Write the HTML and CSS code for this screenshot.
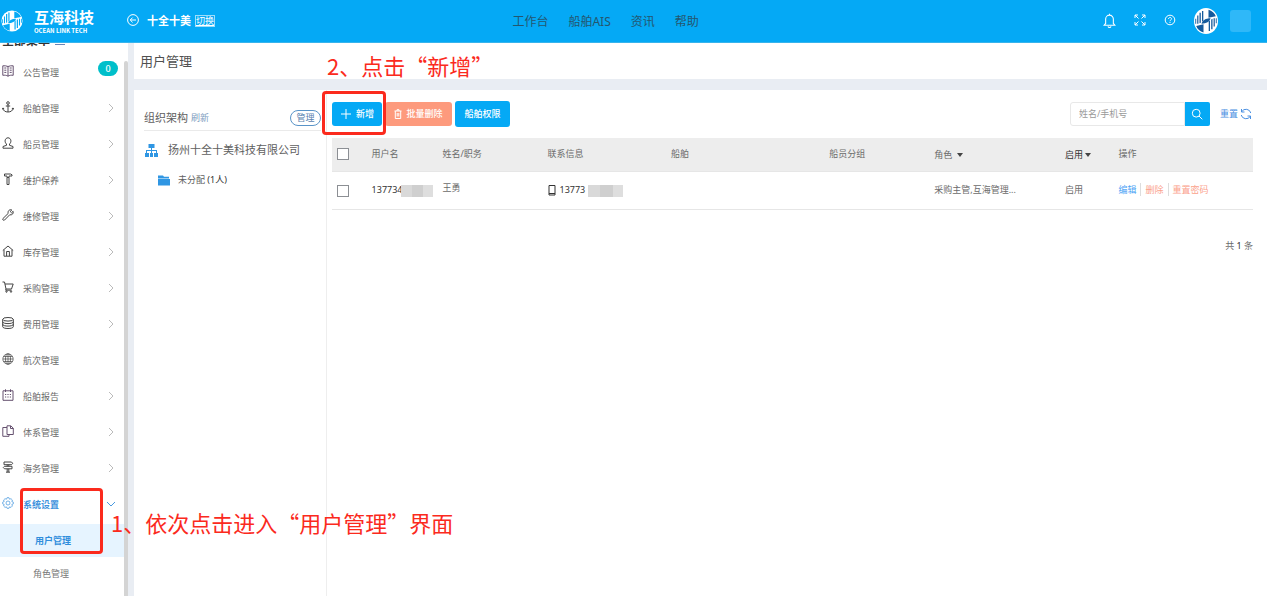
FILE: index.html
```html
<!DOCTYPE html>
<html lang="zh-CN">
<head>
<meta charset="utf-8">
<title>用户管理</title>
<link rel="stylesheet" href="styles.css">
</head>
<body>
<svg class="defs" aria-hidden="true">
  <symbol id="chev" viewBox="0 0 6 10"><path d="M1 1l4 4-4 4"/></symbol>
  <symbol id="mark" viewBox="0 0 24 24">
    <path d="M14.500 1.500C18 2.300 20.700 4.600 21.800 7.500L14.500 9zM9.500 22.500C6 21.700 3.300 19.400 2.200 16.500L9.500 15z"/>
    <path d="M7.500 14.500c1-3 4-5 9-5-1 3-4 5-9 5z"/>
    <path d="M8 2.800h1.300v9L8 12.800zM5.500 4.300h1.300v9.200l-1.300.5zM3.200 7h1.200v7.500h-1.200zM1.300 10h.9v4.500h-.9z"/>
    <path d="M16 21.200h-1.300v-9l1.300-1zM18.500 19.700h-1.300v-9.200l1.300-.5zM20.800 17h-1.200V9.500h1.200zM22.700 14h-.9V9.500h.9z"/>
  </symbol>
</svg>

<header class="topbar">
  <div class="topbar-left">
    <div class="brand">
      <svg class="brand-mark" viewBox="0 0 24 24"><circle cx="12" cy="12" r="11.500"/><use href="#mark"/></svg>
      <div class="brand-text"><strong>互海科技</strong><span>OCEAN LINK TECH</span></div>
    </div>
    <div class="company">
      <svg class="icon" viewBox="0 0 12 12"><circle cx="6" cy="6" r="5.400"/><path d="M9 6H3.400M5.600 3.600L3.200 6l2.400 2.400"/></svg>
      <strong>十全十美</strong>
      <a class="switch" href="#">切换</a>
    </div>
  </div>
  <nav class="topnav">
    <a href="#">工作台</a><a href="#">船舶AIS</a><a href="#">资讯</a><a href="#">帮助</a>
  </nav>
  <div class="tools">
    <button class="tool" aria-label="通知"><svg class="bell" viewBox="0 0 12 15"><path d="M1 11.500h10L9.600 9.800V5.600a3.600 3.600 0 0 0-7.200 0v4.200zM4.600 12.500c.3 1.500 2.500 1.500 2.800 0M6 2V.6"/></svg></button>
    <button class="tool" aria-label="全屏"><svg class="icon" viewBox="0 0 12 12"><path d="M1 4V1h3M1 1l3.500 3.500M8 1h3v3M11 1L7.500 4.500M1 8v3h3M1 11l3.500-3.500M11 8v3H8M11 11L7.500 7.500"/></svg></button>
    <button class="tool" aria-label="帮助"><svg class="icon" viewBox="0 0 12 12"><circle cx="6" cy="6" r="4.800"/><path d="M4.500 5c0-2 3-2 3-.2C7.500 6 6 6 6 7.200M6 8v1"/></svg></button>
    <svg class="avatar" viewBox="0 0 24 24" preserveAspectRatio="none"><circle cx="12" cy="12" r="12"/><use href="#mark"/></svg>
    <span class="user-name"></span>
  </div>
</header>

<div class="shell">
  <aside class="sidebar">
    <h2 class="menu-title">全部菜单 <i></i></h2>
    <ul class="menu">
      <li><a href="#"><svg class="icon purple" viewBox="0 0 12 12"><path d="M6 1.500C4.500.8 2.500.6.8.8v9.500C2.500 10 4.500 10.200 6 11.200c1.500-1 3.500-1.200 5.200-.9V.8C9.500.6 7.500.8 6 1.500zM6 1.500v9.700M2.300 3h2M2.300 5.200h2M2.300 7.400h2M7.700 3h2M7.700 5.200h2M7.700 7.400h2"/></svg><span>公告管理</span><b class="badge">0</b></a></li>
      <li><a href="#"><svg class="icon" viewBox="0 0 12 12"><circle cx="6" cy="2" r="1.300"/><path d="M6 3.300V11M3.800 5h4.400M.8 7c.4 2.800 2.500 4 5.200 4s4.800-1.200 5.200-4M.5 8.300L.9 7l1.300.8M11.500 8.300L11.100 7l-1.300.8"/></svg><span>船舶管理</span><svg class="chev"><use href="#chev"/></svg></a></li>
      <li><a href="#"><svg class="icon" viewBox="0 0 12 12"><path d="M4.500 7C2 5 3 .8 6 .8S10 5 7.500 7v1.300L11 9.500v1.700H1V9.500l3.500-1.200z"/></svg><span>船员管理</span><svg class="chev"><use href="#chev"/></svg></a></li>
      <li><a href="#"><svg class="icon" viewBox="0 0 12 12"><path d="M2.500 1h6l1.500.8V3H7v1.500H5V3H2.500zM5 4.500h2v7H5z"/></svg><span>维护保养</span><svg class="chev"><use href="#chev"/></svg></a></li>
      <li><a href="#"><svg class="icon" viewBox="0 0 12 12"><path d="M9.800 1C7.500 0 5.500 2 6.200 4.400L.9 9.600c-.7 1 .6 2.200 1.600 1.500l5.200-5.300c2.300.6 4.200-1.400 3.400-3.500L9.500 3.800 8.200 2.500z"/></svg><span>维修管理</span><svg class="chev"><use href="#chev"/></svg></a></li>
      <li><a href="#"><svg class="icon" viewBox="0 0 12 12"><path d="M.8 5.500L6 1l5.200 4.500M2 4.800v6.400h8V4.800M4.600 11V6.500h2.800V11"/></svg><span>库存管理</span><svg class="chev"><use href="#chev"/></svg></a></li>
      <li><a href="#"><svg class="icon" viewBox="0 0 12 12"><path d="M.5 1h2l1.500 7h5.500l1.700-5H3M4 8l-.4 1.200h6"/><circle cx="4.500" cy="10.600" r=".7"/><circle cx="9" cy="10.600" r=".7"/></svg><span>采购管理</span><svg class="chev"><use href="#chev"/></svg></a></li>
      <li><a href="#"><svg class="icon" viewBox="0 0 12 12"><ellipse cx="6" cy="2.300" rx="5.300" ry="1.800"/><path d="M.7 2.300v7.400c0 2.400 10.600 2.400 10.600 0V2.300M.7 4.800c0 2.400 10.600 2.400 10.600 0M.7 7.300c0 2.400 10.600 2.400 10.600 0"/></svg><span>费用管理</span><svg class="chev"><use href="#chev"/></svg></a></li>
      <li><a href="#"><svg class="icon globe" viewBox="0 0 12 12"><circle cx="6" cy="6" r="5.200"/><ellipse cx="6" cy="6" rx="2.500" ry="5.200"/><path d="M6 1v10M1 6h10M1.700 3.500h8.600M1.700 8.500h8.600"/></svg><span>航次管理</span></a></li>
      <li><a href="#"><svg class="icon purple" viewBox="0 0 12 12"><path d="M1 1.800h10v9.500H1zM3.500.3v2.700M8.500.3v2.700M3 5.500h1.200M5.400 5.500h1.200M7.800 5.500H9M3 8h1.200M5.400 8h1.200M7.800 8H9"/></svg><span>船舶报告</span><svg class="chev"><use href="#chev"/></svg></a></li>
      <li><a href="#"><svg class="icon purple" viewBox="0 0 12 12"><path d="M5 2.500H.8v8.800H7V9.500M5 .8h3.800l2.500 2.400v6.300H5zM8.500 1v2.500h2.800"/></svg><span>体系管理</span><svg class="chev"><use href="#chev"/></svg></a></li>
      <li><a href="#"><svg class="icon" viewBox="0 0 12 12"><path d="M2 1h7.500l1.200 1.300-1.200 1.400H2zM10 5.300H2.500L1.300 6.500l1.200 1.300H10zM5.200 3.700v1.600M6.800 3.700v1.600M5.200 7.800V11M6.800 7.800V11M4 11.200h4"/></svg><span>海务管理</span><svg class="chev"><use href="#chev"/></svg></a></li>
      <li class="open"><a href="#"><svg class="icon globe" viewBox="0 0 12 12"><circle cx="6" cy="6" r="2"/><path d="M5 .7h2l.5 1.500 1.500-.5L10.400 3l-.6 1.500 1.500.6v1.800l-1.500.6.6 1.500L9 10.400l-1.500-.5-.5 1.400H5l-.5-1.400-1.500.5L1.600 9l.6-1.500-1.500-.6V5.100l1.500-.6L1.600 3 3 1.700l1.500.5z"/></svg><span>系统设置</span><svg class="chev down"><use href="#chev"/></svg></a>
        <ul class="submenu">
          <li class="current"><a href="#">用户管理</a></li>
          <li><a href="#">角色管理</a></li>
        </ul>
      </li>
    </ul>
    <div class="scrollbar"></div>
  </aside>

  <main class="main">
    <h1 class="page-title">用户管理</h1>
    <div class="panel">
      <section class="org">
        <div class="org-head"><h2>组织架构</h2><a href="#">刷新</a><button class="pill">管理</button></div>
        <ul class="tree">
          <li class="root"><svg class="sitemap" viewBox="0 0 13 13"><path d="M3.500 0h6v4h-6zM6 4h1v2h5v3h1v4H9V9h2V7H7v2h1v4H5V9h1V7H2v2h2v4H0V9h1V6h5z"/></svg><span>扬州十全十美科技有限公司</span></li>
          <li class="leaf"><svg class="folder" viewBox="0 0 12 10"><path d="M0 0h5l1 1.200h5V3H0zM0 3.500h12V10H0z"/></svg><span>未分配 <em>(1人)</em></span></li>
        </ul>
      </section>

      <section class="users">
        <div class="toolbar">
          <button class="btn add"><svg class="icon" viewBox="0 0 12 12"><path d="M6 1v10M1 6h10"/></svg>新增</button>
          <button class="btn danger"><svg class="trash" viewBox="0 0 8 10"><path d="M.5 2h7M3 2V.7h2V2M1.300 2v7.500h5.400V2M3.200 4v3.500M4.800 4v3.500"/></svg>批量删除</button>
          <button class="btn">船舶权限</button>
          <form class="search">
            <input type="text" placeholder="姓名/手机号" aria-label="姓名/手机号">
            <button type="button" aria-label="搜索"><svg class="icon" viewBox="0 0 12 12"><circle cx="5.200" cy="5.200" r="3.900"/><path d="M8 8l3.300 3.300"/></svg></button>
          </form>
          <a class="reset" href="#">重置<svg class="icon" viewBox="0 0 12 12"><path d="M10.800 5A5 5 0 0 0 1.800 3.500M1.200 7a5 5 0 0 0 9 1.500M1.500 1v3h3M10.500 11V8h-3"/></svg></a>
        </div>
        <table class="grid">
          <colgroup><col class="c-check"><col class="c-user"><col class="c-name"><col class="c-contact"><col class="c-ship"><col class="c-group"><col class="c-role"><col class="c-state"><col></colgroup>
          <thead><tr>
            <th><input type="checkbox" aria-label="全选"></th><th>用户名</th><th>姓名/职务</th><th>联系信息</th><th>船舶</th><th>船员分组</th>
            <th class="sort">角色 <i class="caret"></i></th><th class="sort dark">启用<i class="caret"></i></th><th>操作</th>
          </tr></thead>
          <tbody><tr>
            <td><input type="checkbox" aria-label="选择王勇"></td>
            <td><span class="masked">137734<i class="mosaic"></i></span></td>
            <td class="name">王勇</td>
            <td><span class="masked"><svg class="phone" viewBox="0 0 8 11"><path d="M1 .5h6v9.500H1zM1 8.500h6"/></svg>13773<i class="mosaic wide"></i></span></td>
            <td></td><td></td>
            <td>采购主管,互海管理...</td>
            <td>启用</td>
            <td class="actions"><a class="edit" href="#">编辑</a><a href="#">删除</a><a href="#">重置密码</a></td>
          </tr></tbody>
        </table>
        <p class="total">共 <b>1</b> 条</p>
      </section>
    </div>
  </main>
</div>

<div class="mark-box box-add"></div>
<div class="mark-box box-menu"></div>
<p class="note note-add">2、点击“新增”</p>
<p class="note note-menu">1、依次点击进入“用户管理”界面</p>
</body>
</html>
```
FILE: styles.css
```css
* { box-sizing: border-box; }
body {
  margin: 0;
  height: 100vh;
  display: flex;
  flex-direction: column;
  overflow: hidden;
  background: #e9edf3;
  color: #6b6b6b;
  font: 9px/12px "Noto Sans", "Noto Sans CJK SC", sans-serif;
}
a { color: inherit; text-decoration: none; }
ul, h1, h2, p { margin: 0; padding: 0; list-style: none; font-weight: 400; }
button, input { font: inherit; color: inherit; border: 0; padding: 0; background: none; }
em, i { font-style: normal; }
svg { flex: none; fill: none; stroke: currentColor; stroke-width: 1; }
.defs { display: none; }
.icon { width: 12px; height: 12px; }

.topbar {
  flex: none;
  height: 43px;
  display: grid;
  grid-template-columns: 9fr auto 10fr;
  align-items: center;
  background: #05a9f5;
  border-bottom: 1px solid #38b4ec;
  color: #fff;
}
.topbar-left, .brand, .company, .tools { display: flex; align-items: center; }
.topbar-left { gap: 35px; }
.brand { gap: 11px; padding-left: 1px; }
.brand-mark { width: 22px; height: 22px; color: #05a9f5; }
.brand-mark, .avatar { stroke: none; }
.brand-mark circle, .avatar circle { fill: #fff; }
.brand-mark use, .avatar use { fill: currentColor; }
.brand-text { width: 58px; padding-bottom: 1px; white-space: nowrap; }
.brand-text strong { display: block; font: 700 15px/20px "Noto Sans CJK SC", sans-serif; }
.brand-text span { display: block; font: 700 6px/8px "Noto Sans CJK SC", sans-serif; }
.company { gap: 8px; font-size: 11px; }
.company .icon { margin-top: -2px; }
.switch { margin-left: -4px; border: 1px solid #9bddfb; font-size: 9px; line-height: 10px; text-decoration: underline; }
.topnav { display: flex; gap: 20px; padding: 1px 0 0 1px; font-size: 12px; color: #24566e; }
.tools { justify-content: flex-end; padding-right: 16px; }
.tool { display: flex; margin-right: 18px; }
.tool .icon { margin-top: -2px; }
.bell { width: 13px; height: 16px; }
.avatar { width: 24px; height: 26px; margin-right: 12px; color: #155a9c; }
.user-name { width: 21px; height: 22px; border-radius: 3px; background: #2fb8f8; }

.shell { flex: 1; min-height: 0; display: flex; }
.sidebar { position: relative; flex: none; width: 128px; background: #fff; overflow: hidden; }
.menu-title {
  display: flex;
  align-items: flex-end;
  height: 4px;
  margin-bottom: 7px;
  padding-left: 2px;
  overflow: hidden;
  color: #333;
  font-size: 12px;
  font-weight: 700;
}
.menu-title i { width: 10px; height: 3px; margin-left: 5px; border-top: 1px solid #6b85b5; }
.menu { margin-right: 4px; }
.menu a { display: flex; align-items: center; height: 36px; padding: 0 10px 0 2px; }
.menu a > span { margin-left: 9px; padding-top: 2px; }
.menu .icon { color: #444; margin-top: -2px; }
.menu .purple { color: #65506f; }
.menu .globe { stroke-width: .7; }
.chev { width: 6px; height: 10px; margin-left: auto; color: #bbb; }
.down { transform: rotate(90deg); color: #4a9ae0; }
.badge {
  margin: -7px -4px 0 auto;
  width: 20px;
  border-radius: 8px;
  background: #00bfca;
  color: #fff;
  line-height: 15px;
  text-align: center;
  font-weight: 500;
}
.menu .open, .menu .open > a .icon { color: #3f93dd; }
.open > a { font-weight: 700; }
.submenu { padding-top: 2px; }
.menu .submenu a { height: 33px; padding-left: 33px; color: #777; }
.menu .submenu .current a { padding-left: 35px; background: #e6f4ff; color: #2f8ddc; font-weight: 700; }
.scrollbar { position: absolute; top: 18px; right: 0; bottom: 0; width: 4px; border-radius: 2px 2px 0 0; background: #d4d4d4; }

.main { flex: 1; min-width: 0; display: flex; flex-direction: column; padding-left: 6px; }
.page-title { margin-bottom: 11px; padding-left: 6px; background: #fff; color: #505050; font-size: 13px; line-height: 36px; }
.panel { flex: 1; display: flex; background: #fff; }
.org { flex: none; width: 193px; padding: 15px 5px 0 10px; border-right: 1px solid #eee; }
.org-head { display: flex; align-items: center; height: 26px; gap: 3px; border-bottom: 1px solid #eaeaea; color: #7d9cc0; }
.org-head h2 { color: #606060; font-size: 11px; }
.pill { margin-left: auto; width: 31px; height: 16px; border: 1px solid #5a94c8; border-radius: 8px; color: #5a83b0; line-height: 14px; }
.tree li { display: flex; align-items: center; height: 30px; color: #606060; }
.root { margin-top: 4px; padding-left: 1px; gap: 10px; font-size: 11px; white-space: nowrap; }
.leaf { padding-left: 14px; gap: 8px; }
.leaf em { color: #333; }
.sitemap { width: 13px; height: 13px; fill: #2f96e3; stroke: none; }
.folder { width: 12px; height: 11px; fill: #2f96e3; stroke: none; }

.users { flex: 1; min-width: 0; padding: 11px 14px 0 5px; }
.toolbar { display: flex; align-items: center; height: 26px; margin-bottom: 11px; }
.btn {
  display: flex;
  align-items: center;
  justify-content: center;
  gap: 4px;
  width: 55px;
  height: 26px;
  margin-right: 3px;
  border-radius: 3px;
  background: #05a9f5;
  color: #fff;
  font-weight: 500;
}
.add { width: 50px; height: 24px; }
.danger { width: 67px; height: 24px; background: #fd9a7d; }
.trash { width: 8px; height: 10px; }
.search { display: flex; margin-left: auto; height: 24px; }
.search input { width: 115px; padding-left: 8px; border: 1px solid #e8e8e8; border-radius: 3px 0 0 3px; }
.search input::placeholder { color: #999; opacity: 1; }
.search button { width: 25px; display: flex; align-items: center; justify-content: center; background: #05a9f5; color: #fff; border-radius: 0 2px 2px 0; }
.reset { display: flex; align-items: center; gap: 2px; margin: 0 1px 0 10px; color: #4a90e2; }

.grid { width: 100%; border-collapse: collapse; table-layout: fixed; }
.grid th, .grid td { height: 33px; padding: 0; text-align: left; font-weight: 400; white-space: nowrap; border-bottom: 1px solid #e6e6e6; }
.grid th { background: #ededed; padding-bottom: 1px; }
.grid .sort { padding: 2px 0 0; }
.grid td { height: 38px; }
.grid .dark { color: #333; }
.grid .name { padding-bottom: 4px; }
.c-check { width: 4.3%; }
.c-user { width: 7.7%; }
.c-name { width: 11.4%; }
.c-contact { width: 13.4%; }
.c-ship { width: 17.2%; }
.c-group { width: 11.4%; }
.c-role { width: 14.2%; }
.c-state { width: 5.8%; }
.grid input { appearance: none; display: block; width: 12px; height: 12px; margin: 1px 0 0 5px; border: 1px solid #8c8f94; background: #fff; }
.caret { display: inline-block; margin: 0 0 1px 2px; border: 3px solid transparent; border-top: 4px solid #444; border-bottom: 0; }
.masked { display: flex; align-items: center; color: #333; }
.mosaic { width: 32px; height: 12px; margin: 2px 0 0 -1px; background: linear-gradient(90deg, #d9d9d9 33%, #cfcfcf 33% 70%, #dedede 70%); }
.wide { width: 35px; margin-left: 3px; }
.phone { width: 8px; height: 11px; margin: 0 3px 0 1px; }
.actions a { color: #fba28c; }
.actions a + a { margin-left: 4px; padding-left: 4px; border-left: 1px solid #ddd; }
.actions .edit { color: #4ea3f5; }
.total { margin-top: 30px; text-align: right; }
.total b { color: #333; font-weight: 400; }

/* Tutorial callouts drawn over the page */
.mark-box { position: absolute; border: 3px solid #fb2a1d; border-radius: 4px; }
.box-add { left: 322px; top: 91px; width: 64px; height: 44px; }
.box-menu { left: 20px; top: 488px; width: 83px; height: 66px; }
.note { position: absolute; color: #fb2a1d; font: 22px/26px "Noto Sans CJK SC", sans-serif; white-space: nowrap; }
.note-add { left: 327px; top: 52px; }
.note-menu { left: 111px; top: 509px; }
```
